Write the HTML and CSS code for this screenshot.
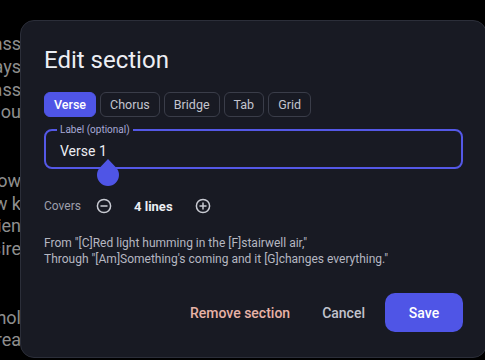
FILE: index.html
```
<!DOCTYPE html>
<html>
<head>
<meta charset="utf-8">
<link rel="stylesheet" href="styles.css">
</head>
<body>
<div class="backdrop">
  <div class="bg-line"><span>glass</span></div>
  <div class="bg-line"><span>always</span></div>
  <div class="bg-line"><span>pass</span></div>
  <div class="bg-line"><span>so lou</span></div>
  <div class="bg-line"><span>&nbsp;</span></div>
  <div class="bg-line"><span>&nbsp;</span></div>
  <div class="bg-line"><span>below</span></div>
  <div class="bg-line"><span>new k</span></div>
  <div class="bg-line"><span>patien</span></div>
  <div class="bg-line"><span>desire</span></div>
  <div class="bg-line"><span>&nbsp;</span></div>
  <div class="bg-line"><span>&nbsp;</span></div>
  <div class="bg-line"><span>whol</span></div>
  <div class="bg-line"><span>brea</span></div>
</div>

<div class="dialog">
  <h1 class="title">Edit section</h1>
  <div class="chips">
    <button class="chip active">Verse</button>
    <button class="chip">Chorus</button>
    <button class="chip">Bridge</button>
    <button class="chip">Tab</button>
    <button class="chip">Grid</button>
  </div>
  <div class="field-wrap">
    <fieldset class="field">
      <legend class="legend">Label (optional)</legend>
      <div class="value">Verse 1</div>
    </fieldset>
    <svg class="handle" width="22" height="27" viewBox="0 0 22 27">
      <path d="M11 0 L18.8 8.2 A11 11 0 1 1 3.2 8.2 Z" fill="#4f55e6"/>
    </svg>
  </div>
  <div class="covers">
    <span class="covers-label">Covers</span>
    <svg class="round-btn" width="16" height="16" viewBox="0 0 16 16">
      <circle cx="8" cy="8" r="6.6" fill="none" stroke="#c9cbd3" stroke-width="1.5"/>
      <path d="M5 8 H11" stroke="#c9cbd3" stroke-width="1.5" stroke-linecap="round"/>
    </svg>
    <span class="count">4 lines</span>
    <svg class="round-btn" width="16" height="16" viewBox="0 0 16 16">
      <circle cx="8" cy="8" r="6.6" fill="none" stroke="#c9cbd3" stroke-width="1.5"/>
      <path d="M5 8 H11 M8 5 V11" stroke="#c9cbd3" stroke-width="1.5" stroke-linecap="round"/>
    </svg>
  </div>
  <div class="lyrics">
    <div>From "[C]Red light humming in the [F]stairwell air,"</div>
    <div>Through "[Am]Something's coming and it [G]changes everything."</div>
  </div>
  <div class="actions">
    <button class="text-btn remove">Remove section</button>
    <button class="text-btn cancel">Cancel</button>
    <button class="save">Save</button>
  </div>
</div>
</body>
</html>
```
FILE: styles.css
```
* { box-sizing: border-box; }
html, body {
  margin: 0;
  padding: 0;
  width: 485px;
  height: 360px;
  overflow: hidden;
  background: #000;
  font-family: Roboto, "Noto Sans", sans-serif;
}
.backdrop {
  position: absolute;
  left: 0;
  top: 33px;
  width: 21px;
}
.bg-line {
  display: flex;
  justify-content: flex-end;
  font-size: 18px;
  line-height: 22.8px;
  color: #8e8e8e;
  white-space: nowrap;
}
.bg-line span { flex: none; }
.dialog {
  position: absolute;
  left: 20px;
  top: 20px;
  width: 467px;
  height: 338px;
  background: #181a23;
  border: 1px solid #2b2e39;
  border-radius: 14px;
  padding: 19px 23px 0 23px;
  display: flex;
  flex-direction: column;
}
.title {
  margin: 0;
  font-size: 24px;
  font-weight: 400;
  line-height: 40px;
  color: #eceef3;
}
.chips {
  display: flex;
  gap: 4px;
  margin-top: 12px;
}
.chip {
  height: 25px;
  padding: 0 9px;
  border: 1px solid #3a3d49;
  border-radius: 6px;
  background: transparent;
  color: #c3c5cf;
  font-family: Roboto, sans-serif;
  font-size: 12.5px;
  line-height: 23px;
}
.chip.active {
  background: #4f55e6;
  border-color: #4f55e6;
  color: #fff;
  font-weight: 500;
}
.field-wrap {
  position: relative;
  margin-top: 7px;
}
.field {
  margin: 0;
  height: 45px;
  border: 2px solid #5458e6;
  border-radius: 8px;
  padding: 0 14px;
}
.legend {
  font-size: 10px;
  color: #a7a9d6;
  padding: 0 3px;
  margin-left: -3px;
  line-height: 12px;
}
.value {
  font-size: 14px;
  color: #ecedf2;
  line-height: 18px;
  margin-top: 6px;
}
.handle {
  position: absolute;
  left: 53px;
  top: 35px;
}
.covers {
  display: flex;
  align-items: center;
  margin-top: 26px;
  height: 22px;
}
.covers-label {
  font-size: 12px;
  color: #9d9fab;
  width: 52px;
}
.count {
  font-size: 13px;
  font-weight: 700;
  color: #eceef3;
  margin: 0 22px 0 22px;
}
.lyrics {
  margin-top: 18px;
  font-size: 12px;
  line-height: 16px;
  color: #b5b7c1;
}
.actions {
  display: flex;
  justify-content: flex-end;
  align-items: center;
  margin-top: 26px;
}
.text-btn {
  background: none;
  border: none;
  font-family: Roboto, sans-serif;
  font-size: 14px;
  font-weight: 500;
  padding: 0 16px;
  height: 39px;
}
.remove { color: #e7b2a6; }
.cancel { color: #c1c3cd; margin-right: 4px; }
.save {
  width: 78px;
  height: 39px;
  background: #4f55e6;
  color: #fff;
  border: none;
  border-radius: 10px;
  font-family: Roboto, sans-serif;
  font-size: 14px;
  font-weight: 500;
}
```
